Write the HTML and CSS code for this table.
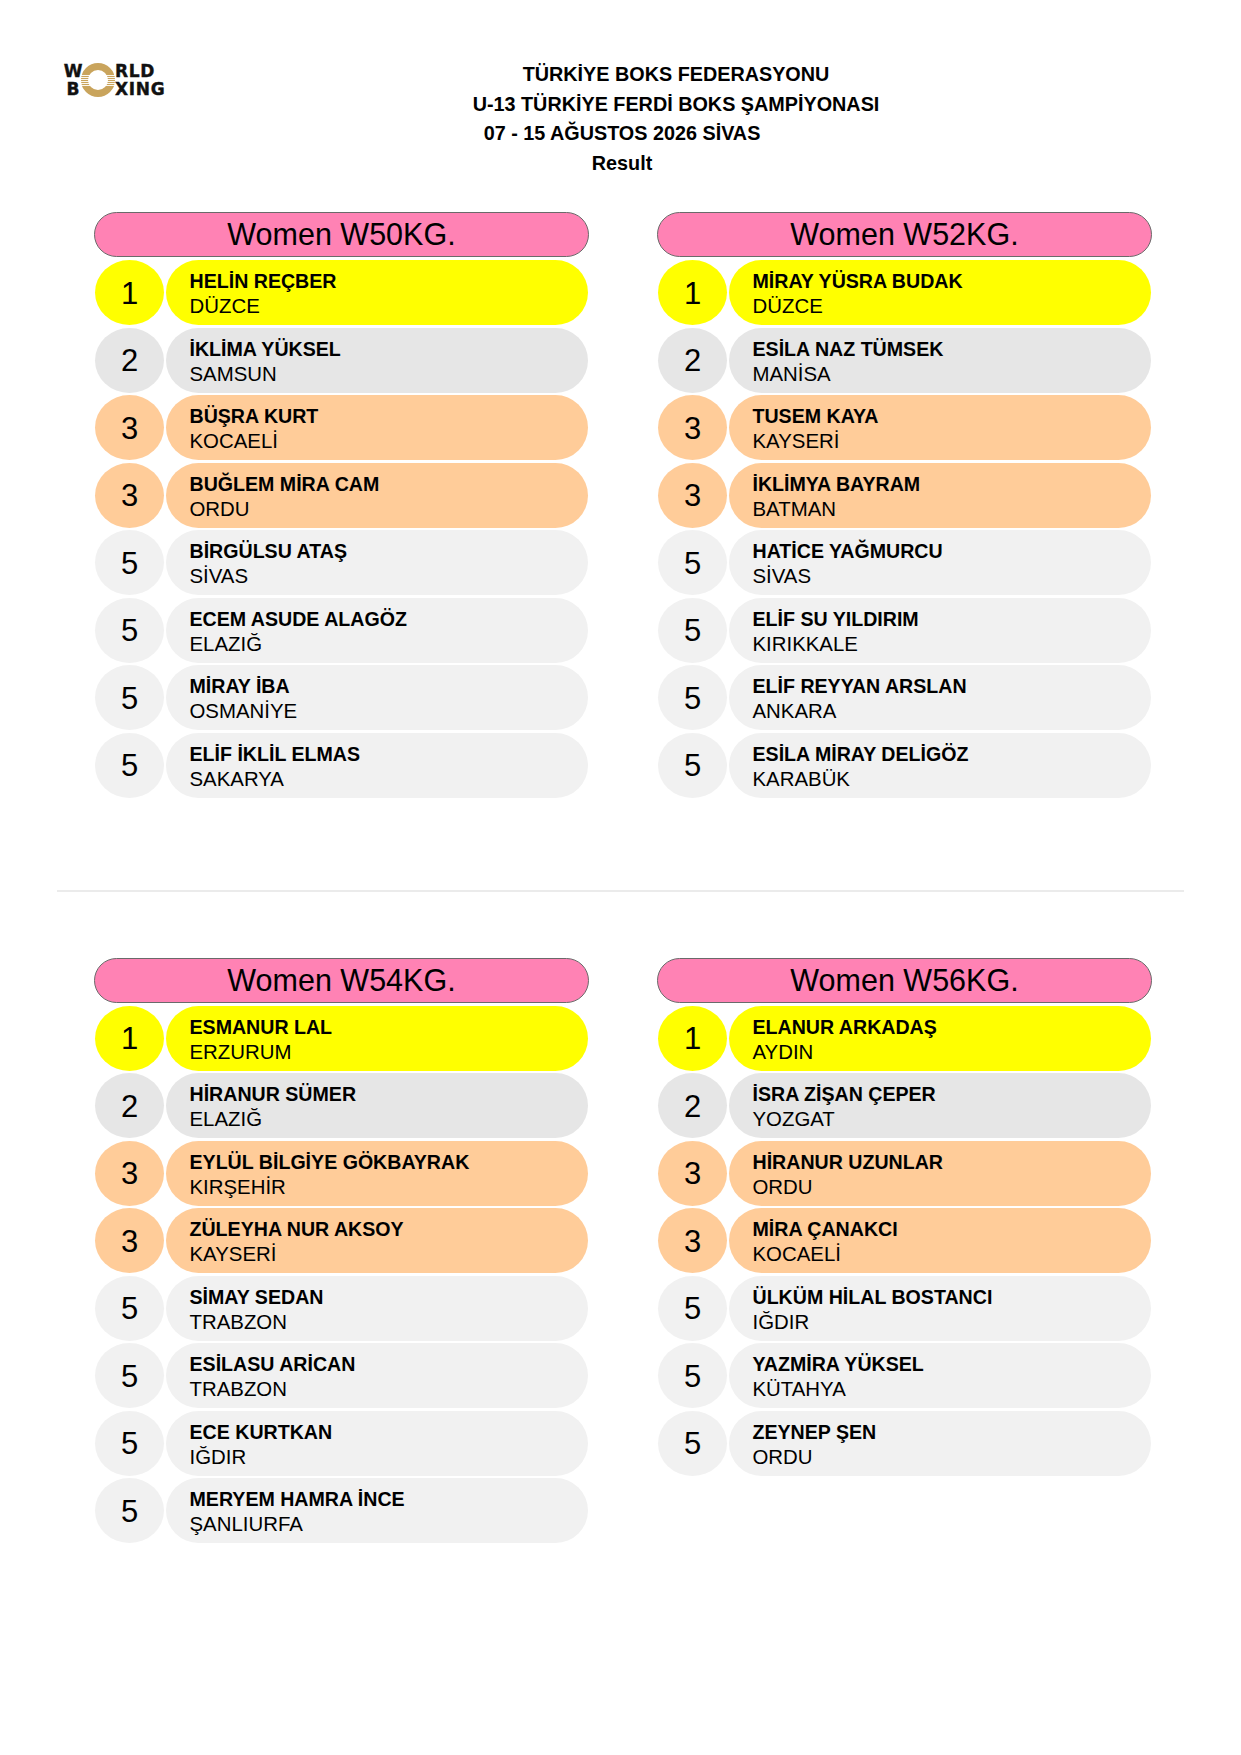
FILE: index.html
```html
<!DOCTYPE html>
<html lang="tr">
<head>
<meta charset="utf-8">
<title>U-13 Türkiye Ferdi Boks Şampiyonası - Result</title>
<link rel="stylesheet" href="styles.css">
</head>
<body>
<div class="page">
  <header class="top">
    <div class="logo">
      <div class="logo-left"><span>W</span><span>B</span></div>
      <svg class="ring" width="34" height="34" viewBox="0 0 34 34" aria-hidden="true">
        <circle cx="17" cy="17" r="13.5" fill="none" stroke="#C9A45C" stroke-width="7"/>
        <g stroke="#ffffff" stroke-width="0.9">
          <line x1="0" y1="12.5" x2="34" y2="12.5"/>
          <line x1="0" y1="14.5" x2="34" y2="14.5"/>
          <line x1="0" y1="16.5" x2="34" y2="16.5"/>
          <line x1="0" y1="18.5" x2="34" y2="18.5"/>
          <line x1="0" y1="20.5" x2="34" y2="20.5"/>
          <line x1="0" y1="22.5" x2="34" y2="22.5"/>
        </g>
      </svg>
      <div class="logo-right"><span>RLD</span><span>XING</span></div>
    </div>
    <div class="title">
      <div class="t-line">TÜRKİYE BOKS FEDERASYONU</div>
      <div class="t-line">U-13 TÜRKİYE FERDİ BOKS ŞAMPİYONASI</div>
      <div class="t-line shift">07 - 15 AĞUSTOS 2026 SİVAS</div>
      <div class="t-line shift">Result</div>
    </div>
  </header>

  <section class="grid grid-top">
    <div class="card">
      <div class="card-head">Women W50KG.</div>
      <ul class="rows">
        <li class="row gold"><span class="rank">1</span><div class="who"><span class="name">HELİN REÇBER</span><span class="city">DÜZCE</span></div></li>
        <li class="row silver"><span class="rank">2</span><div class="who"><span class="name">İKLİMA YÜKSEL</span><span class="city">SAMSUN</span></div></li>
        <li class="row bronze"><span class="rank">3</span><div class="who"><span class="name">BÜŞRA KURT</span><span class="city">KOCAELİ</span></div></li>
        <li class="row bronze"><span class="rank">3</span><div class="who"><span class="name">BUĞLEM MİRA CAM</span><span class="city">ORDU</span></div></li>
        <li class="row other"><span class="rank">5</span><div class="who"><span class="name">BİRGÜLSU ATAŞ</span><span class="city">SİVAS</span></div></li>
        <li class="row other"><span class="rank">5</span><div class="who"><span class="name">ECEM ASUDE ALAGÖZ</span><span class="city">ELAZIĞ</span></div></li>
        <li class="row other"><span class="rank">5</span><div class="who"><span class="name">MİRAY İBA</span><span class="city">OSMANİYE</span></div></li>
        <li class="row other"><span class="rank">5</span><div class="who"><span class="name">ELİF İKLİL ELMAS</span><span class="city">SAKARYA</span></div></li>
      </ul>
    </div>
    <div class="card">
      <div class="card-head">Women W52KG.</div>
      <ul class="rows">
        <li class="row gold"><span class="rank">1</span><div class="who"><span class="name">MİRAY YÜSRA BUDAK</span><span class="city">DÜZCE</span></div></li>
        <li class="row silver"><span class="rank">2</span><div class="who"><span class="name">ESİLA NAZ TÜMSEK</span><span class="city">MANİSA</span></div></li>
        <li class="row bronze"><span class="rank">3</span><div class="who"><span class="name">TUSEM KAYA</span><span class="city">KAYSERİ</span></div></li>
        <li class="row bronze"><span class="rank">3</span><div class="who"><span class="name">İKLİMYA BAYRAM</span><span class="city">BATMAN</span></div></li>
        <li class="row other"><span class="rank">5</span><div class="who"><span class="name">HATİCE YAĞMURCU</span><span class="city">SİVAS</span></div></li>
        <li class="row other"><span class="rank">5</span><div class="who"><span class="name">ELİF SU YILDIRIM</span><span class="city">KIRIKKALE</span></div></li>
        <li class="row other"><span class="rank">5</span><div class="who"><span class="name">ELİF REYYAN ARSLAN</span><span class="city">ANKARA</span></div></li>
        <li class="row other"><span class="rank">5</span><div class="who"><span class="name">ESİLA MİRAY DELİGÖZ</span><span class="city">KARABÜK</span></div></li>
      </ul>
    </div>
  </section>

  <hr class="sep">

  <section class="grid grid-bottom">
    <div class="card">
      <div class="card-head">Women W54KG.</div>
      <ul class="rows">
        <li class="row gold"><span class="rank">1</span><div class="who"><span class="name">ESMANUR LAL</span><span class="city">ERZURUM</span></div></li>
        <li class="row silver"><span class="rank">2</span><div class="who"><span class="name">HİRANUR SÜMER</span><span class="city">ELAZIĞ</span></div></li>
        <li class="row bronze"><span class="rank">3</span><div class="who"><span class="name">EYLÜL BİLGİYE GÖKBAYRAK</span><span class="city">KIRŞEHİR</span></div></li>
        <li class="row bronze"><span class="rank">3</span><div class="who"><span class="name">ZÜLEYHA NUR AKSOY</span><span class="city">KAYSERİ</span></div></li>
        <li class="row other"><span class="rank">5</span><div class="who"><span class="name">SİMAY SEDAN</span><span class="city">TRABZON</span></div></li>
        <li class="row other"><span class="rank">5</span><div class="who"><span class="name">ESİLASU ARİCAN</span><span class="city">TRABZON</span></div></li>
        <li class="row other"><span class="rank">5</span><div class="who"><span class="name">ECE KURTKAN</span><span class="city">IĞDIR</span></div></li>
        <li class="row other"><span class="rank">5</span><div class="who"><span class="name">MERYEM HAMRA İNCE</span><span class="city">ŞANLIURFA</span></div></li>
      </ul>
    </div>
    <div class="card">
      <div class="card-head">Women W56KG.</div>
      <ul class="rows">
        <li class="row gold"><span class="rank">1</span><div class="who"><span class="name">ELANUR ARKADAŞ</span><span class="city">AYDIN</span></div></li>
        <li class="row silver"><span class="rank">2</span><div class="who"><span class="name">İSRA ZİŞAN ÇEPER</span><span class="city">YOZGAT</span></div></li>
        <li class="row bronze"><span class="rank">3</span><div class="who"><span class="name">HİRANUR UZUNLAR</span><span class="city">ORDU</span></div></li>
        <li class="row bronze"><span class="rank">3</span><div class="who"><span class="name">MİRA ÇANAKCI</span><span class="city">KOCAELİ</span></div></li>
        <li class="row other"><span class="rank">5</span><div class="who"><span class="name">ÜLKÜM HİLAL BOSTANCI</span><span class="city">IĞDIR</span></div></li>
        <li class="row other"><span class="rank">5</span><div class="who"><span class="name">YAZMİRA YÜKSEL</span><span class="city">KÜTAHYA</span></div></li>
        <li class="row other"><span class="rank">5</span><div class="who"><span class="name">ZEYNEP ŞEN</span><span class="city">ORDU</span></div></li>
      </ul>
    </div>
  </section>
</div>
</body>
</html>
```

FILE: styles.css
```css
* { box-sizing: border-box; }

html, body {
  margin: 0;
  padding: 0;
  background: #ffffff;
}

body {
  font-family: "Liberation Sans", Arial, sans-serif;
  color: #000000;
}

.page {
  width: 1241px;
  min-height: 1755px;
}

/* ---------- header ---------- */
.top {
  display: flex;
  align-items: flex-start;
  padding-top: 60px;
}

.logo {
  display: flex;
  align-items: center;
  margin-left: 65px;
  margin-top: 2px;
  width: 100px;
  height: 36px;
  font-family: "DejaVu Sans", sans-serif;
  font-weight: 700;
  font-size: 17px;
  line-height: 18px;
  color: #111111;
  -webkit-text-stroke: 0.4px #111111;
}

.logo-left,
.logo-right {
  display: flex;
  flex-direction: column;
}

.logo-left {
  width: 16px;
  align-items: center;
}

.logo-right {
  letter-spacing: 0.7px;
}

.ring {
  display: block;
  flex: none;
}

.title {
  margin-left: 305px;
  width: 412px;
  font-weight: 700;
  font-size: 19.8px;
  line-height: 29.5px;
}

.t-line {
  text-align: center;
  white-space: nowrap;
}

.t-line.shift {
  padding-right: 108px;
}

/* ---------- grids / cards ---------- */
.grid {
  display: grid;
  grid-template-columns: 495px 495px;
  column-gap: 68px;
  align-items: start;
  padding-left: 94px;
}

.grid-top {
  margin-top: 34px;
}

.grid-bottom {
  margin-top: 66px;
}

.sep {
  margin: 92px 0 0 57px;
  width: 1127px;
  height: 2px;
  border: 0;
  background: #ebebeb;
}

.card-head {
  height: 45px;
  border: 1.5px solid #6a6a6a;
  border-radius: 23px;
  background: #ff82b4;
  font-size: 30.5px;
  line-height: 42px;
  text-align: center;
}

.rows {
  list-style: none;
  margin: 3px 0 0 0;
  padding: 0;
  display: flex;
  flex-direction: column;
  gap: 2.5px;
}

.row {
  display: flex;
  gap: 1.5px;
  height: 65px;
  padding: 0 1px;
}

.rank {
  flex: none;
  width: 69px;
  height: 65px;
  border-radius: 50%;
  display: flex;
  align-items: center;
  justify-content: center;
  font-size: 31px;
  padding-top: 2px;
}

.who {
  flex: 1;
  border-radius: 33px;
  padding: 9px 0 0 24px;
  display: flex;
  flex-direction: column;
}

.name {
  font-weight: 700;
  font-size: 19.6px;
  line-height: 25px;
  white-space: nowrap;
}

.city {
  font-size: 20.4px;
  line-height: 25px;
  white-space: nowrap;
}

.gold .rank,
.gold .who { background: #ffff00; }

.silver .rank,
.silver .who { background: #e6e6e6; }

.bronze .rank,
.bronze .who { background: #ffcc99; }

.other .rank,
.other .who { background: #f1f1f1; }
```
